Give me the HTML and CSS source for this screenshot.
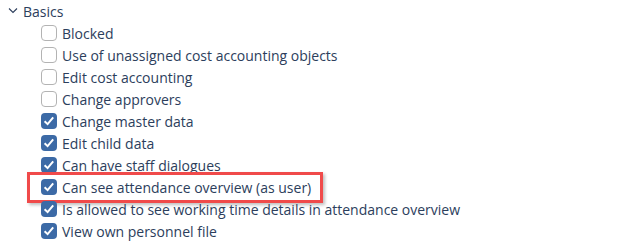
FILE: index.html
```html
<!DOCTYPE html>
<html lang="en">
<head>
    <meta charset="UTF-8">
    <title>Rights</title>
    <link rel="stylesheet" href="styles.css">
</head>
<body>

<div class="group">
    <div class="group-head">
        <svg class="chevron" width="10" height="6" viewBox="0 0 10 6"><path d="M1 0.5 L5 4.5 L9 0.5" fill="none" stroke="#2c3e5c" stroke-width="1.1"/></svg>
        <span>Basics</span>
    </div>
    <ul class="rights">
        <li><span class="box"></span>Blocked</li>
        <li><span class="box"></span>Use of unassigned cost accounting objects</li>
        <li><span class="box"></span>Edit cost accounting</li>
        <li><span class="box"></span>Change approvers</li>
        <li><span class="box checked"></span>Change master data</li>
        <li><span class="box checked"></span>Edit child data</li>
        <li><span class="box checked"></span>Can have staff dialogues</li>
        <li class="marked"><span class="box checked"></span>Can see attendance overview (as user)</li>
        <li><span class="box checked"></span>Is allowed to see working time details in attendance overview</li>
        <li><span class="box checked"></span>View own personnel file</li>
    </ul>
</div>

</body>
</html>
```

FILE: styles.css
```css
body {
    font-family: "Open Sans", sans-serif;
    font-size: 14px;
    color: #2c3e5c;
    margin: 0;
    padding: 0;
    background: #fff;
}
.group-head {
    display: flex;
    align-items: center;
    height: 22px;
    padding-left: 8px;
}
.chevron {
    margin-right: 5px;
}
.rights {
    list-style: none;
    margin: 0;
    padding: 0 0 0 41px;
}
.rights li {
    display: flex;
    align-items: center;
    height: 22px;
    position: relative;
}
.box {
    width: 16px;
    height: 16px;
    box-sizing: border-box;
    border: 1px solid #b3b3b3;
    border-radius: 4px;
    margin-right: 5px;
    background: #fff;
}
.box.checked {
    border: none;
    background: #3c6aa6 url("data:image/svg+xml,%3Csvg xmlns='http://www.w3.org/2000/svg' viewBox='0 0 16 16'%3E%3Cpath d='M3.6 8.2 L6.6 11.1 L12.2 4.3' fill='none' stroke='white' stroke-width='2'/%3E%3C/svg%3E") no-repeat center;
}
.rights li.marked::after {
    content: "";
    position: absolute;
    left: -14px;
    top: -4px;
    width: 296px;
    height: 31px;
    box-sizing: border-box;
    border: 3px solid #f04a4a;
    box-shadow: 2px 2px 3px rgba(0, 0, 0, 0.25);
}
```
